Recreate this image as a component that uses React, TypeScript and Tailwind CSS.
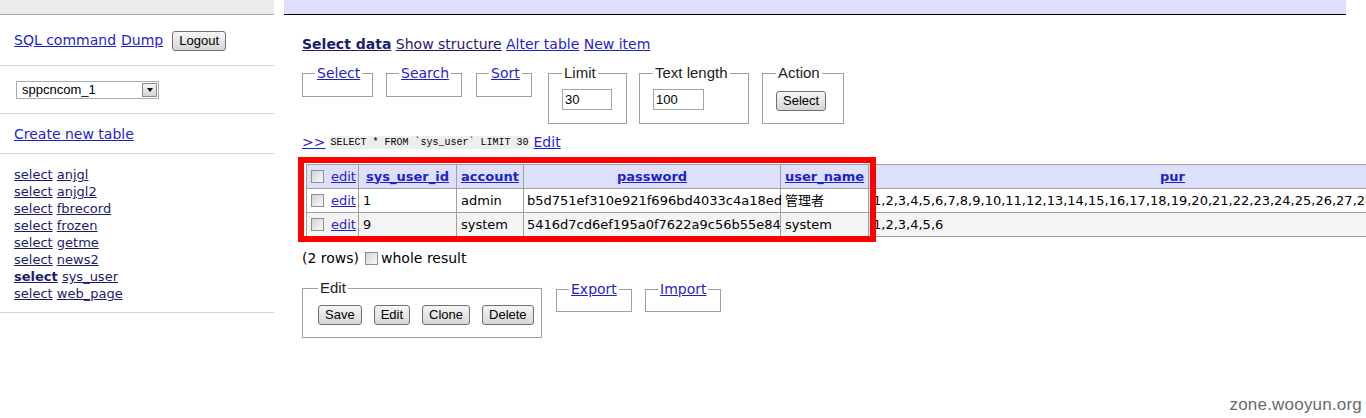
const tables = ["anjgl", "anjgl2", "fbrecord", "frozen", "getme", "news2", "sys_user", "web_page"];

const rows = [
  {
    id: "1",
    account: "admin",
    password: "b5d751ef310e921f696bd4033c4a18ed",
    name: "管理者",
    pur: "1,2,3,4,5,6,7,8,9,10,11,12,13,14,15,16,17,18,19,20,21,22,23,24,25,26,27,28,29,30,31,32,33,34,35,36",
  },
  {
    id: "9",
    account: "system",
    password: "5416d7cd6ef195a0f7622a9c56b55e84",
    name: "system",
    pur: "1,2,3,4,5,6",
  },
];

function Check() {
  return (
    <span className="inline-block h-[13px] w-[13px] border border-[#8e8f8f] bg-linear-to-br from-[#d4d4d4] to-[#fafafa] align-middle" />
  );
}

function Btn({ children }: { children: React.ReactNode }) {
  return (
    <button className="h-[20px] rounded-[3px] border border-[#707070] bg-linear-to-b from-[#f6f6f6] to-[#d6d6d6] px-[6px] font-['Liberation_Sans',Arial,sans-serif] text-[13px] leading-[18px] text-black">
      {children}
    </button>
  );
}

function Box({
  legend,
  className,
  children,
}: {
  legend: React.ReactNode;
  className: string;
  children?: React.ReactNode;
}) {
  return (
    <fieldset className={"min-w-0 border border-[#a0a0a0] " + className}>
      <legend className="px-[2px] leading-[16px]">{legend}</legend>
      {children}
    </fieldset>
  );
}

const blue = "text-[#1f1fcc] underline";
const navy = "text-[#1c1c6e] underline";
const legendText = "font-['Liberation_Sans',Arial,sans-serif] text-[15px] text-[#222]";

export default function App() {
  return (
    <div className="relative h-[418px] w-[1366px] overflow-hidden bg-white font-['DejaVu_Sans',Verdana,sans-serif] text-black">
      <div className="flex">
        {/* sidebar */}
        <aside className="w-[274px] shrink-0 text-[14px]">
          <div className="h-[15px] border-b border-[#a8a8a8] bg-[#ececec]" />
          <div className="flex items-center border-b border-[#d4d4d4] px-[14px] pb-[14px] pt-[15px]">
            <a className={blue}>SQL command</a>
            <a className={blue + " ml-[5px]"}>Dump</a>
            <span className="ml-[9px]">
              <Btn>Logout</Btn>
            </span>
          </div>
          <div className="border-b border-[#d4d4d4] px-[16px] pb-[14px] pt-[15px]">
            <div className="flex h-[18px] w-[143px] items-center justify-between border border-[#a5acb5] bg-white pl-[5px] pr-[1px]">
              <span className="font-['Liberation_Sans',Arial,sans-serif] text-[13px] leading-[16px]">sppcncom_1</span>
              <span className="flex h-[14px] w-[15px] items-center justify-center border border-[#8a8a8a] bg-linear-to-b from-[#f4f4f4] to-[#d4d4d4]">
                <span className="h-0 w-0 border-x-[3px] border-t-[4px] border-x-transparent border-t-black" />
              </span>
            </div>
          </div>
          <div className="border-b border-[#d4d4d4] px-[14px] pb-[10px] pt-[12px] leading-[17px]">
            <a className={blue}>Create new table</a>
          </div>
          <div className="border-b border-[#d4d4d4] px-[14px] pb-[10px] pt-[12px] text-[13px] leading-[17px]">
            {tables.map((t) => (
              <div key={t}>
                <a className={navy + (t === "sys_user" ? " font-bold" : "")}>select</a>{" "}
                <a className={navy}>{t}</a>
              </div>
            ))}
          </div>
        </aside>

        {/* main */}
        <main className="ml-[10px] min-w-0 flex-1">
          <div className="mr-[20px] h-[15px] border-b border-black bg-[#dde0fc]" />
          <div className="pl-[18px]">
            <nav className="mt-[21px] text-[14px] leading-[17px]">
              <a className={navy + " font-bold"}>Select data</a>{" "}
              <a className={navy}>Show structure</a>{" "}
              <a className={blue}>Alter table</a>{" "}
              <a className={blue}>New item</a>
            </nav>

            <div className="mt-[12px] flex items-start text-[14px]">
              <Box legend={<a className={blue}>Select</a>} className="h-[32px] w-[71px] pl-[12px] pr-[4px]" />
              <Box legend={<a className={blue}>Search</a>} className="ml-[13px] h-[32px] w-[76px] pl-[12px] pr-[4px]" />
              <Box legend={<a className={blue}>Sort</a>} className="ml-[14px] h-[32px] w-[56px] pl-[12px] pr-[4px]" />
              <Box legend={<span className={legendText}>Limit</span>} className="ml-[16px] h-[59px] w-[79px] px-[13px] pt-[8px]">
                <div className="h-[21px] w-[50px] border border-[#a5a5a5] px-[2px] font-['Liberation_Sans',Arial,sans-serif] text-[13px] leading-[19px]">30</div>
              </Box>
              <Box legend={<span className={legendText}>Text length</span>} className="ml-[12px] h-[59px] w-[110px] px-[13px] pt-[8px]">
                <div className="h-[21px] w-[51px] border border-[#a5a5a5] px-[2px] font-['Liberation_Sans',Arial,sans-serif] text-[13px] leading-[19px]">100</div>
              </Box>
              <Box legend={<span className={legendText}>Action</span>} className="ml-[13px] h-[59px] w-[82px] px-[13px] pt-[9px]">
                <Btn>Select</Btn>
              </Box>
            </div>

            <div className="mt-[10px] flex items-center text-[14px] leading-[17px]">
              <a className={blue}>&gt;&gt;</a>
              <code className="ml-[4px] bg-[#eeeeee] px-[1px] font-['Liberation_Mono',monospace] text-[10px] leading-[13px]">
                SELECT * FROM `sys_user` LIMIT 30
              </code>
              <a className={blue + " ml-[4px]"}>Edit</a>
            </div>

            <table className="ml-[4px] mt-[13px] w-[1171px] table-fixed border-collapse whitespace-nowrap text-[13px] leading-[16px]">
              <colgroup>
                <col className="w-[52px]" />
                <col className="w-[98px]" />
                <col className="w-[67px]" />
                <col className="w-[257px]" />
                <col className="w-[88px]" />
                <col className="w-[608px]" />
              </colgroup>
              <thead>
                <tr className="h-[24px] bg-[#dde0fb]">
                  <th className="border border-[#a0a0a0] px-[4px] text-left font-normal">
                    <Check />
                    <a className={blue + " ml-[7px] align-middle"}>edit</a>
                  </th>
                  {["sys_user_id", "account", "password", "user_name", "pur"].map((h) => (
                    <th key={h} className="border border-[#a0a0a0] px-[3px] text-center font-bold">
                      <a className={blue}>{h}</a>
                    </th>
                  ))}
                </tr>
              </thead>
              <tbody>
                {rows.map((r, i) => (
                  <tr key={r.id} className={"h-[24px] " + (i === 1 ? "bg-[#f4f4f4]" : "bg-white")}>
                    <td className="border border-[#a0a0a0] px-[4px]">
                      <Check />
                      <a className={blue + " ml-[7px] align-middle"}>edit</a>
                    </td>
                    <td className="border border-[#a0a0a0] px-[4px]">{r.id}</td>
                    <td className="border border-[#a0a0a0] px-[4px]">{r.account}</td>
                    <td className="border border-[#a0a0a0] px-[3px]">{r.password}</td>
                    <td className="border border-[#a0a0a0] px-[4px] font-['DejaVu_Sans','Noto_Sans_CJK_SC',sans-serif]">{r.name}</td>
                    <td className="overflow-hidden border border-[#a0a0a0] px-[4px]">{r.pur}</td>
                  </tr>
                ))}
              </tbody>
            </table>

            <div className="mt-[13px] flex items-center text-[14px] leading-[17px]">
              <span>(2 rows)</span>
              <span className="ml-[6px] flex">
                <Check />
              </span>
              <span className="ml-[3px]">whole result</span>
            </div>

            <div className="mt-[13px] flex items-start text-[14px]">
              <Box legend={<span className={legendText}>Edit</span>} className="h-[58px] w-[240px] pl-[15px] pr-[8px] pt-[9px]">
                <div className="flex gap-[12px]">
                  <Btn>Save</Btn>
                  <Btn>Edit</Btn>
                  <Btn>Clone</Btn>
                  <Btn>Delete</Btn>
                </div>
              </Box>
              <Box legend={<a className={blue}>Export</a>} className="ml-[14px] mt-[1px] h-[31px] w-[76px] pl-[12px] pr-[4px]" />
              <Box legend={<a className={blue}>Import</a>} className="ml-[13px] mt-[1px] h-[31px] w-[76px] pl-[12px] pr-[4px]" />
            </div>
          </div>
        </main>
      </div>

      {/* red highlight drawn over the result grid */}
      <div className="pointer-events-none absolute left-[298px] top-[157px] h-[85px] w-[578px] border-[6px] border-[#ff0000]" />

      <div className="absolute bottom-[1px] right-[4px] font-['Liberation_Sans',Arial,sans-serif] text-[17px] tracking-[0.2px] text-[#6a6a6a]">
        zone.wooyun.org
      </div>
    </div>
  );
}
